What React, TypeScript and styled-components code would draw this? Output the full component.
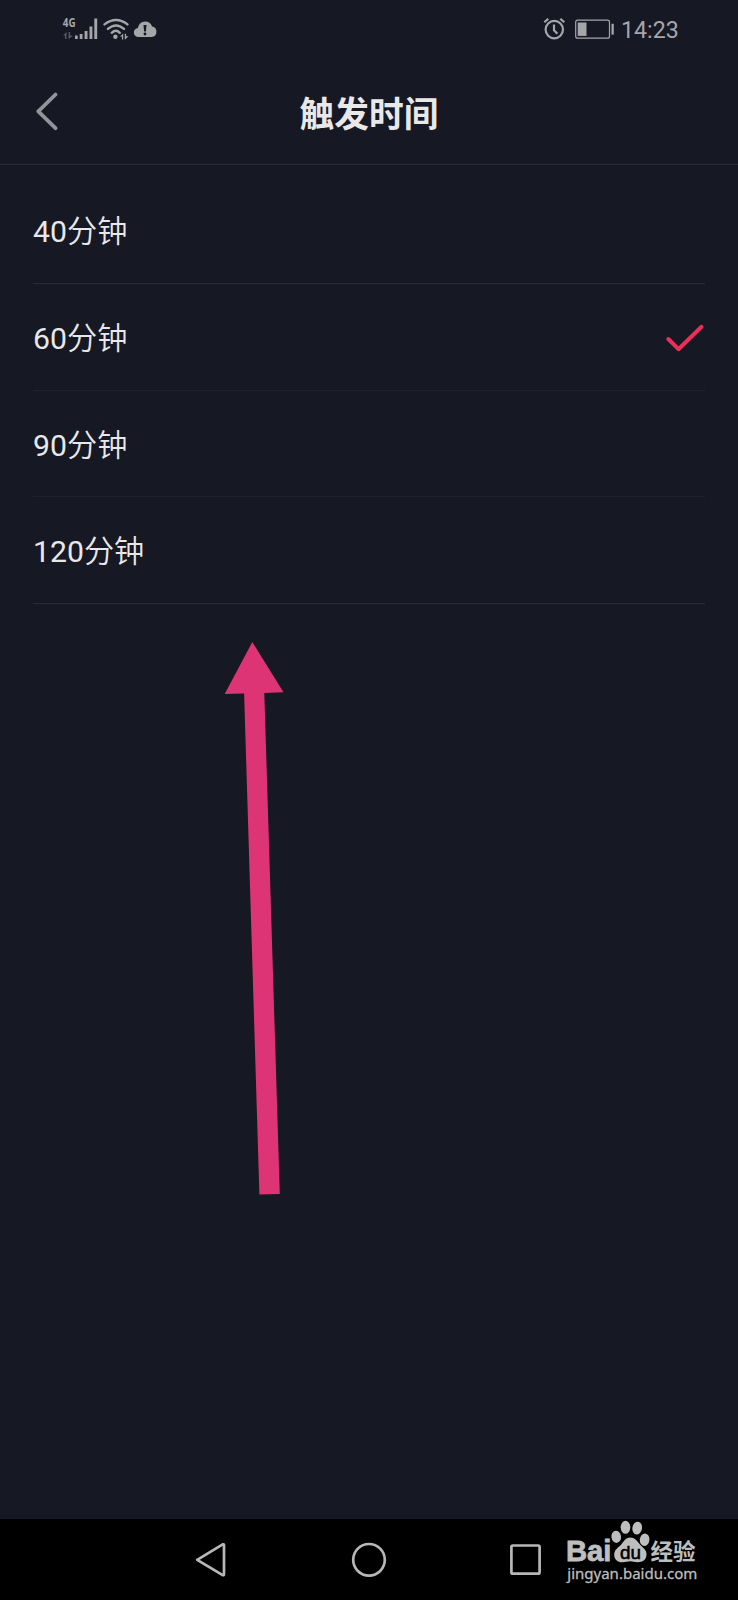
import React from 'react';
import styled, { createGlobalStyle } from 'styled-components';

const GlobalStyle = createGlobalStyle`
  * { box-sizing: border-box; }
  body { margin: 0; background: #161823; }
`;

const Screen = styled.div`
  position: relative;
  display: flex;
  flex-direction: column;
  width: 738px;
  height: 1600px;
  overflow: hidden;
  background: #161823;
  font-family: Roboto, 'Noto Sans CJK SC', sans-serif;
  svg { display: block; flex: none; }
`;

const StatusBar = styled.div`
  display: flex;
  justify-content: space-between;
  height: 60px;
  padding: 15px 58px 0 62px;
  color: #a5a6aa;
`;

const StatusGroup = styled.div`
  display: flex;
`;

const Network = styled.div`
  width: 12px;
  margin-right: 1px;
`;

const NetworkLabel = styled.div`
  height: 17px;
  padding: 1px 0 0 1px;
  font: 700 12px/13px 'Open Sans', sans-serif;
  transform: scaleX(0.82);
  transform-origin: left;
`;

const Clock = styled.div`
  width: 59px;
  margin-left: 6px;
  font-size: 23.2px;
  line-height: 30px;
  white-space: nowrap;
`;

const Header = styled.header`
  display: flex;
  align-items: center;
  height: 105px;
  padding: 0 36px;
  border-bottom: 1.5px solid #2a2c35;
`;

const Title = styled.h1`
  flex: 1;
  margin: 0 22px 0 0;
  padding-top: 5px;
  text-align: center;
  font-size: 34.7px;
  line-height: 50px;
  font-weight: 700;
  color: #e8e8e9;
`;

const BackButton = styled.div`
  width: 22px;
`;

const Options = styled.main`
  flex: 1;
  padding: 12px 33px 0;
`;

const Option = styled.div<{ $faint?: boolean; $height: number }>`
  display: flex;
  align-items: center;
  justify-content: space-between;
  height: ${p => p.$height}px;
  padding-top: 1px;
  border-bottom: 1px solid ${p => (p.$faint ? '#20222c' : '#2a2c35')};
  font-size: 30.2px;
  line-height: 44px;
  color: #e8e8e9;
`;

const Unit = styled.span`
  font-family: 'Noto Sans CJK SC', sans-serif;
  font-weight: 350;
`;

const NavBar = styled.nav`
  display: flex;
  height: 81px;
  padding: 23px 0 0 195px;
  background: #000;
`;

const NavIcon = styled.div<{ $width: number; $gap: number }>`
  width: ${p => p.$width}px;
  margin-right: ${p => p.$gap}px;
`;

const Pointer = styled.svg`
  position: absolute;
  left: 220px;
  top: 640px;
`;

const Watermark = styled.div`
  position: absolute;
  left: 560px;
  top: 1518px;
  width: 150px;
  height: 72px;
  color: #bebebe;
`;

const items = [
  { minutes: 40, height: 107, faint: false },
  { minutes: 60, height: 107, faint: true },
  { minutes: 90, height: 106, faint: true },
  { minutes: 120, height: 107, faint: false },
];

const SignalIcons = () => (
  <svg width="84" height="26" viewBox="75 15 84 26" fill="#a5a6aa">
    <path d="M74.8 35.6h2.9V39h-2.9zM79.7 34h2.8v5h-2.8zM84.6 31h2.9v8h-2.9zM89.5 26.6h2.9V39h-2.9zM94.3 18.4h2.9V39h-2.9z" />
    <g fill="none" stroke="#a5a6aa" strokeWidth="2.4" strokeLinecap="round">
      <path d="M104.5 24.4Q116 15.7 127.5 24.4" />
      <path d="M107.9 28.9Q116 21.9 124 28.9" />
      <path d="M111.7 32.8Q116 28.8 119.8 32.8" />
    </g>
    <circle cx="115.4" cy="36.8" r="2.2" />
    <path d="M120 36.6l3.2-3.2v6h-1.3v-2.8zM124.8 33.7h1.3v2.6h2.5l-3.8 3.4z" />
    <path d="M138.8 37a4.5 4.5 0 0 1-.8-9c.4-3.6 3.5-6.4 7.1-6.4 3.3 0 6 1.9 6.9 4.9a5.3 5.3 0 0 1-.3 10.5z" />
    <path d="M143.5 25h3l-.6 6.4h-1.8z" fill="#161823" />
    <circle cx="145" cy="34" r="1.4" fill="#161823" />
  </svg>
);

export default function App() {
  return (
    <>
      <GlobalStyle />
      <Screen>
        <StatusBar>
          <StatusGroup>
            <Network>
              <NetworkLabel>4G</NetworkLabel>
              <svg width="12" height="8" viewBox="0 0 12 8" fill="#555761">
                <path d="M1 3.5L4.5 0v7H3V3.5zM6.6 0h1.5v3.5H11L6.6 7.3z" />
              </svg>
            </Network>
            <SignalIcons />
          </StatusGroup>
          <StatusGroup>
            <svg width="72" height="30" viewBox="543 15 72 30" fill="none" stroke="#a5a6aa">
              <circle cx="554.3" cy="29.6" r="8.7" strokeWidth="2.2" />
              <path d="M544.3 22.3l4-3.6M560.3 18.7l4 3.6M554 24.5v5.7l3.4 3.6" strokeWidth="2.2" />
              <rect x="575.7" y="20.2" width="33.8" height="18" rx="2" strokeWidth="1.2" />
              <path d="M577.7 22.5h8.8v13.4h-8.8z" fill="#a5a6aa" stroke="none" />
              <path d="M611.5 23.8h2.3v10.8h-2.3z" fill="#a5a6aa" stroke="none" />
            </svg>
            <Clock>14:23</Clock>
          </StatusGroup>
        </StatusBar>
        <Header>
          <BackButton>
            <svg width="22" height="40" viewBox="36 92 22 40" fill="none" stroke="#92949a" strokeWidth="3.8" strokeLinecap="round" strokeLinejoin="round">
              <path d="M55.5 94.5L38.3 111.3l17.2 16.9" />
            </svg>
          </BackButton>
          <Title>触发时间</Title>
        </Header>
        <Options>
          {items.map(item => (
            <Option key={item.minutes} $height={item.height} $faint={item.faint}>
              <div>{item.minutes}<Unit>分钟</Unit></div>
              {item.minutes === 60 && (
                <svg width="40" height="30" viewBox="665 323 40 30" fill="none" stroke="#ec2e59" strokeWidth="4" strokeLinecap="round" strokeLinejoin="round">
                  <path d="M668.3 339l10.2 10.2 23-22.4" />
                </svg>
              )}
            </Option>
          ))}
        </Options>
        <NavBar>
          <NavIcon $width={31} $gap={125}>
            <svg width="31" height="36" viewBox="195 1542 31 36" fill="none" stroke="#b7b7b7" strokeWidth="2.7" strokeLinejoin="round">
              <path d="M197.2 1559.8l25.5-15.5q1.3-.3 1.3 1v29q0 1.2-1.3.9z" />
            </svg>
          </NavIcon>
          <NavIcon $width={36} $gap={122}>
            <svg width="36" height="36" fill="none" stroke="#b7b7b7" strokeWidth="2.7">
              <circle cx="18" cy="17.8" r="15.8" />
            </svg>
          </NavIcon>
          <NavIcon $width={33} $gap={0}>
            <svg width="33" height="36" fill="none" stroke="#b7b7b7" strokeWidth="2.7">
              <rect x="2.4" y="3.5" width="28.2" height="28.2" rx="1.5" />
            </svg>
          </NavIcon>
        </NavBar>
        <Pointer width="66" height="560" viewBox="220 640 66 560" fill="#dc3475">
          <path d="M252.3 642L283.5 692.2 264.3 693 279.8 1194 259.4 1194.5 244.1 693.5 224.7 694Z" />
        </Pointer>
        <Watermark>
          <svg width="150" height="72" viewBox="560 1518 150 72" fill="#bebebe">
            <text x="566" y="1561" fontFamily="Liberation Sans" fontWeight="700" fontSize="29.5" stroke="#bebebe" strokeWidth=".8" textLength="45.5" lengthAdjust="spacingAndGlyphs">Bai</text>
            <ellipse cx="616.2" cy="1536.8" rx="4.8" ry="6.1" transform="rotate(-8 616.2 1536.8)" />
            <ellipse cx="625.5" cy="1527.3" rx="4.8" ry="6.5" />
            <ellipse cx="637.2" cy="1528.1" rx="4.8" ry="6.4" transform="rotate(10 637.2 1528.1)" />
            <ellipse cx="644.6" cy="1539.7" rx="4.8" ry="6.3" transform="rotate(6 644.6 1539.7)" />
            <path d="M630 1537.5c5 0 7 3.5 10.2 7.2 3 3.5 6.8 5.2 6.3 10.3-.5 5-4 7.3-8.8 7.2-3.3 0-5-1-7.5-1s-4.6 1-8 1c-4.5 0-8-2.8-8-7.3 0-5.5 4-7 7-10.4 2.9-3.3 4.6-7 8.8-7z" />
            <text x="620" y="1559" fontFamily="Liberation Sans" fontSize="19" fill="#000" stroke="#000" strokeWidth=".6" textLength="21" lengthAdjust="spacingAndGlyphs">du</text>
            <text x="650.5" y="1559.5" fontFamily="Noto Sans CJK SC" fontWeight="700" fontSize="23" textLength="45" lengthAdjust="spacingAndGlyphs">经验</text>
            <text x="567.3" y="1578.5" fontFamily="Noto Sans" fontSize="14.8" stroke="#bebebe" strokeWidth=".3" textLength="130" lengthAdjust="spacingAndGlyphs">jingyan.baidu.com</text>
          </svg>
        </Watermark>
      </Screen>
    </>
  );
}
